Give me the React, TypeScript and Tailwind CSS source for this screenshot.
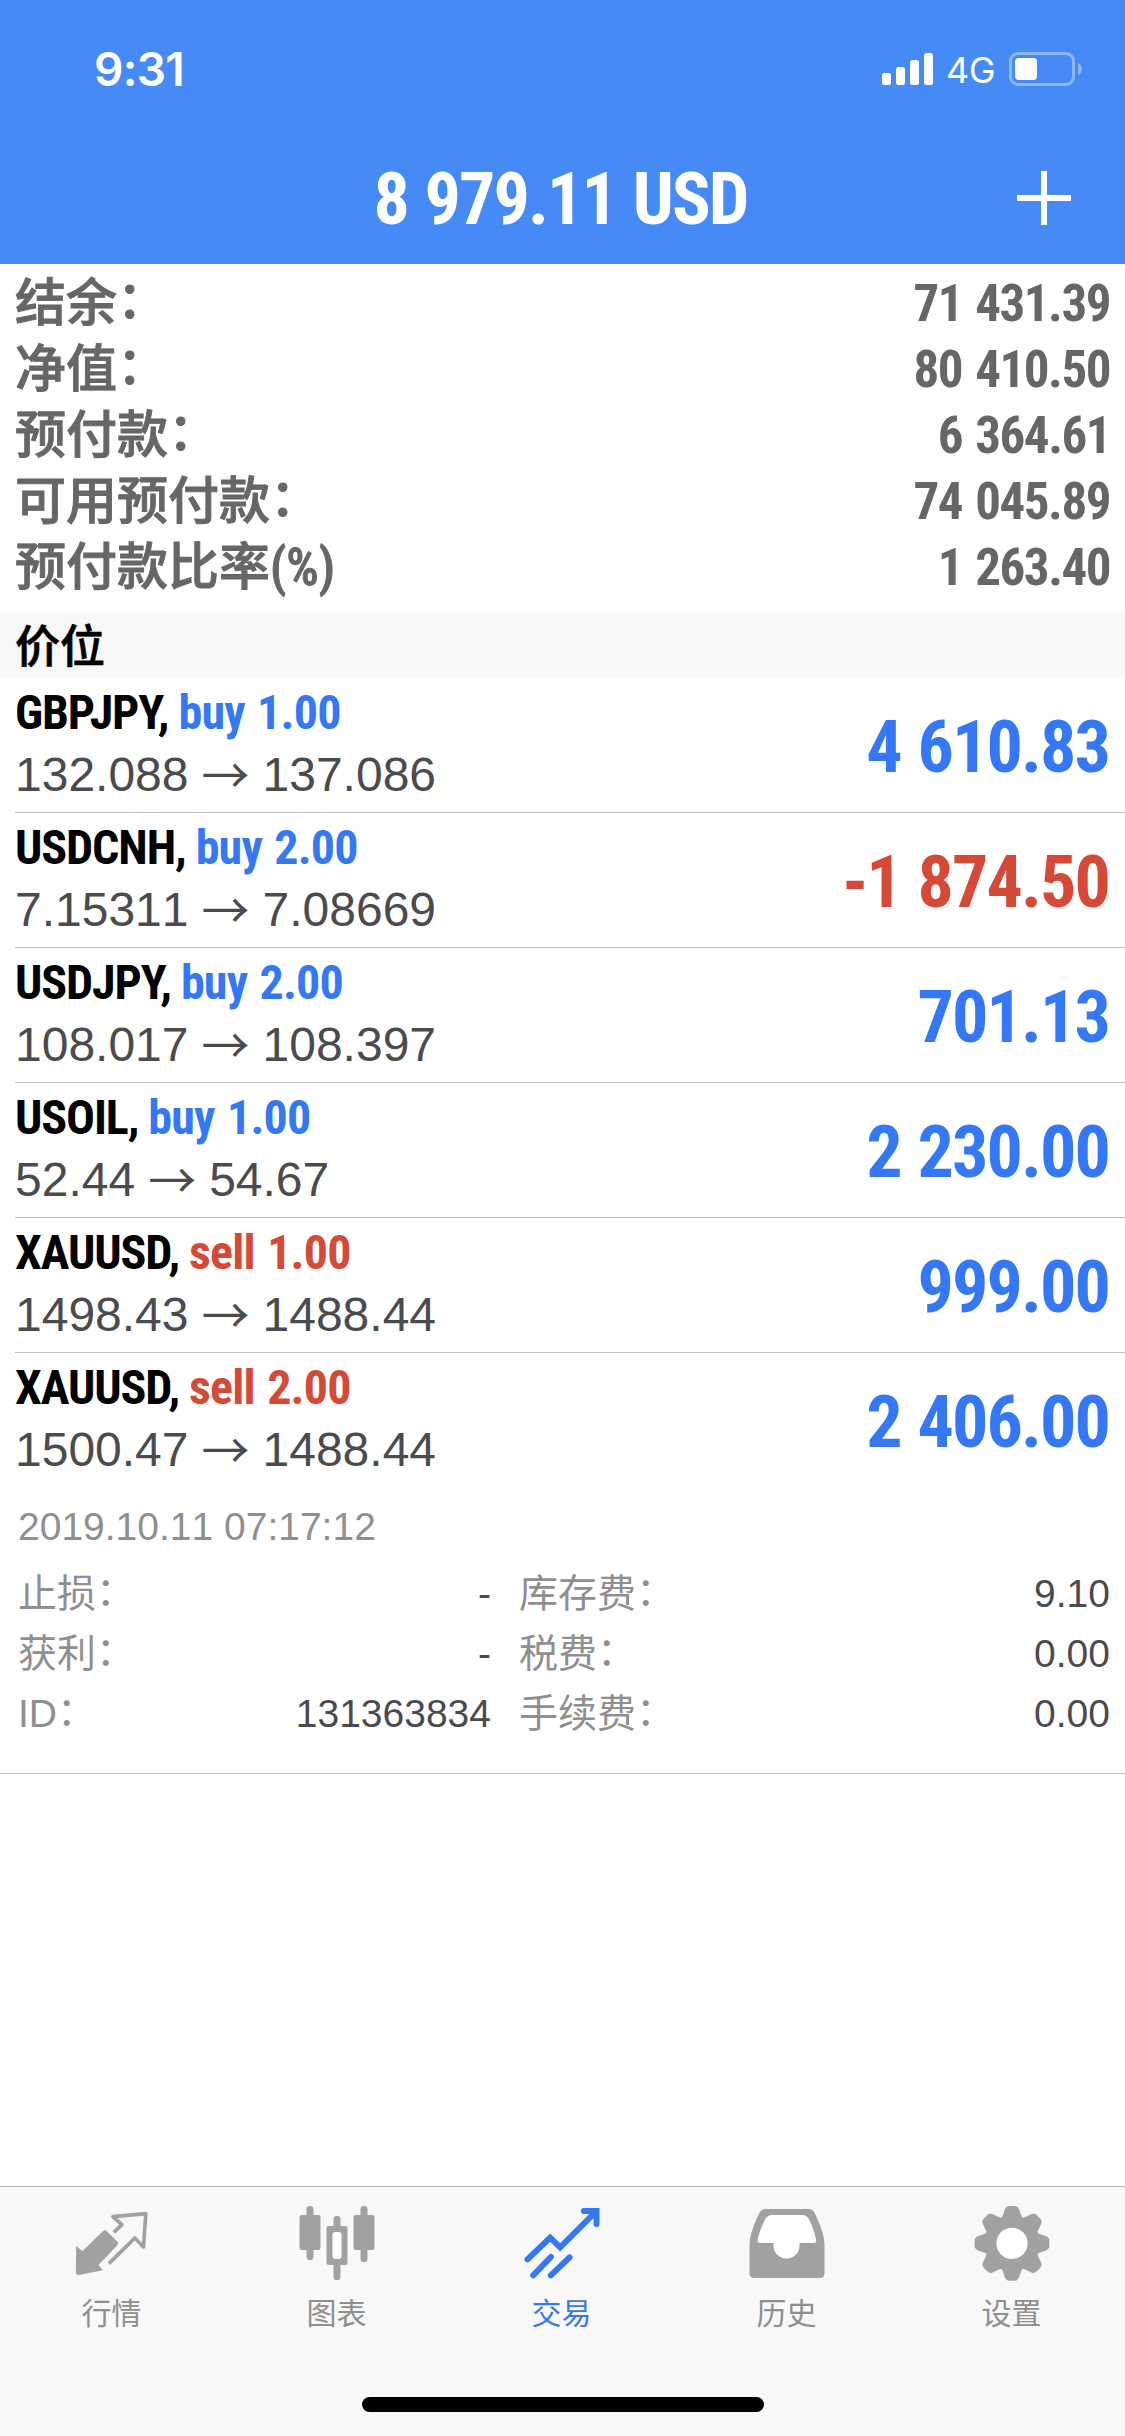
import type { ReactNode } from "react";

type Position = {
    symbol: string
    side: "buy" | "sell"
    volume: string
    open: string
    current: string
    profit: string
}

type Tab = { label: string, icon: ReactNode, active?: boolean }

const summary = [
    { label: "结余：", value: "71 431.39" },
    { label: "净值：", value: "80 410.50" },
    { label: "预付款：", value: "6 364.61" },
    { label: "可用预付款：", value: "74 045.89" },
    { label: "预付款比率(%)", value: "1 263.40" },
]

const positions: Position[] = [
    { symbol: "GBPJPY", side: "buy", volume: "1.00", open: "132.088", current: "137.086", profit: "4 610.83" },
    { symbol: "USDCNH", side: "buy", volume: "2.00", open: "7.15311", current: "7.08669", profit: "-1 874.50" },
    { symbol: "USDJPY", side: "buy", volume: "2.00", open: "108.017", current: "108.397", profit: "701.13" },
    { symbol: "USOIL", side: "buy", volume: "1.00", open: "52.44", current: "54.67", profit: "2 230.00" },
    { symbol: "XAUUSD", side: "sell", volume: "1.00", open: "1498.43", current: "1488.44", profit: "999.00" },
    { symbol: "XAUUSD", side: "sell", volume: "2.00", open: "1500.47", current: "1488.44", profit: "2 406.00" },
]

const details = [
    { label: "止损：", value: "-", feeLabel: "库存费：", fee: "9.10" },
    { label: "获利：", value: "-", feeLabel: "税费：", fee: "0.00" },
    { label: "ID：", value: "131363834", feeLabel: "手续费：", fee: "0.00" },
]

function QuotesIcon() {
    return <svg className="size-20" viewBox="97.5 99 240 240" fill="none">
        <path d="M107 228 L126 243 L188 183 Q193 178 198 183 L231 215 Q236 220 231 225 L174 285 L187 301 L115 315 Q106 315 106 306 Z" fill="#a1a1a1" />
        <path d="M220 187 L244 164 L217 140 L316 131 L309 231 L283 204 L205 281" stroke="#a1a1a1" strokeWidth="11" strokeLinejoin="round" />
    </svg>
}

function ChartIcon() {
    return <svg className="size-20" viewBox="772.5 99 240 240" fill="#a1a1a1">
        <rect x="798" y="108" width="21" height="162" rx="10" />
        <rect x="777" y="135" width="63" height="105" rx="7" />
        <rect x="879" y="138" width="21" height="192" rx="10" />
        <rect x="858" y="168" width="63" height="117" rx="7" />
        <rect x="876" y="186" width="27" height="81" rx="9" fill="#fff" />
        <rect x="960" y="108" width="21" height="168" rx="10" />
        <rect x="939" y="135" width="63" height="105" rx="7" />
    </svg>
}

function TradeIcon() {
    return <svg className="size-20" viewBox="67.5 39 240 240" fill="none" stroke="#3478f6" strokeWidth="18" strokeLinecap="round">
        <path d="M81 208 L149 143 L179 172 L284 67" />
        <path d="M250 63 H288 V102" />
        <path d="M98 256 L151 201" />
        <path d="M151 256 L207 202" />
    </svg>
}

function HistoryIcon() {
    return <svg className="size-20" viewBox="742.5 39 240 240">
        <path d="M747 250 V162 Q748 128 775 72 Q782 57 795 57 H925 Q937 57 944 72 Q971 128 972 162 V250 Q972 264 958 264 H761 Q747 264 747 250 Z" fill="#a1a1a1" />
        <path d="M771 150 Q770 158 778 159 H819 V167 A39 39 0 0 0 897 167 V159 H940 Q949 158 947 150 Q942 124 927 91 Q920 75 905 75 H815 Q800 75 793 89 Q776 124 771 150 Z" fill="#fff" />
    </svg>
}

function SettingsIcon() {
    return <svg className="size-20" viewBox="97.5 39 240 240" fill="#a1a1a1">
        <g transform="translate(214.5 160)">
            <circle r="83" />
            {[0, 45, 90, 135, 180, 225, 270, 315].map(angle =>
                <path key={angle} transform={`rotate(${angle})`} d="M-34 -74 Q-29 -78 -26 -88 L-22 -100 Q-18 -112 -8 -112 H8 Q18 -112 22 -100 L26 -88 Q29 -78 34 -74 Z" />
            )}
            <circle r="47" fill="#fff" />
        </g>
    </svg>
}

const tabs: Tab[] = [
    { label: "行情", icon: <QuotesIcon /> },
    { label: "图表", icon: <ChartIcon /> },
    { label: "交易", icon: <TradeIcon />, active: true },
    { label: "历史", icon: <HistoryIcon /> },
    { label: "设置", icon: <SettingsIcon /> },
]

// full-width colon sits too low next to the characters, lift it a bit
function Label({ text }: { text: string }) {
    if (!text.endsWith("：")) return <span>{text}</span>

    return <span>
        {text.slice(0, -1)}
        <span className="align-[0.05em] font-['Noto_Sans_CJK_SC',sans-serif] leading-none">：</span>
    </span>
}

function StatusBar() {
    return <div className="flex h-[132px] items-start justify-between pl-[94px] pr-[42px]">
        <div className="mt-[41px] font-['Inter',sans-serif] text-[46px]/[56px] font-semibold tracking-[-0.7px]">9:31</div>
        <div className="mt-[52px] flex h-[34px] items-center">
            <svg className="h-[34px] w-[52px]" viewBox="0 0 52 34" fill="#fff">
                <rect x="0" y="21" width="9" height="12" rx="2.5" />
                <rect x="14" y="15" width="9" height="18" rx="2.5" />
                <rect x="28" y="8" width="9" height="25" rx="2.5" />
                <rect x="42" y="1" width="9" height="32" rx="2.5" />
            </svg>
            <span className="ml-3 w-[50px] pt-[2px] font-['Inter',sans-serif] text-[36px]/[36px] tracking-[-0.5px]">4G</span>
            <svg className="ml-[13px] h-[34px] w-[74px]" viewBox="0 0 74 34">
                <rect x="1.5" y="1.5" width="63" height="31" rx="7.5" fill="none" stroke="#8cb8fa" strokeWidth="3" />
                <rect x="6" y="6" width="22" height="22" rx="4" fill="#fff" />
                <path d="M69 11 Q73 13 73 17 T69 23 Z" fill="#8cb8fa" />
            </svg>
        </div>
    </div>
}

function PositionRow({ item, last }: { item: Position, last: boolean }) {
    const sideColor = item.side === "buy" ? "text-[#3478f6]" : "text-[#d64937]"
    const profitColor = item.profit.startsWith("-") ? "text-[#d64937]" : "text-[#3478f6]"

    return <div className={"ml-[15px] flex h-[135px] justify-between pr-4 " + (last ? "" : "border-b border-[#c0c0c3]")}>
        <div>
            <div className="h-[68px] font-['Roboto_Condensed',sans-serif] text-[48px]/[70px] font-bold [font-kerning:normal]">
                <span className="tracking-[-1.1px] text-black">{item.symbol}, </span>
                <span className={"tracking-[-0.8px] [word-spacing:2px] " + sideColor}>{item.side} {item.volume}</span>
            </div>
            <div className="flex h-[58px] items-center gap-[13px] text-[48px]/[58px] text-[#4b4b4e]">
                <span>{item.open}</span>
                <span className="pb-1.5 font-['Noto_Sans_CJK_SC',sans-serif]">→</span>
                <span>{item.current}</span>
            </div>
        </div>
        <div className={"pt-[2px] font-['Roboto_Condensed',sans-serif] text-[72px]/[136px] font-bold tracking-[-1.9px] [word-spacing:2px] " + profitColor}>{item.profit}</div>
    </div>
}

export default function App() {
    return <div className="flex h-[2436px] w-[1125px] flex-col bg-white font-['Liberation_Sans','Noto_Sans_CJK_SC',sans-serif] [font-kerning:none]">
        <header className="h-[264px] bg-[#468bf5] text-white">
            <StatusBar />
            <div className="grid h-[132px] grid-cols-[1fr_auto_1fr] items-center">
                <h1 className="col-start-2 pr-[4px] pt-[3px] font-['Roboto_Condensed',sans-serif] text-[72px]/[129px] font-bold tracking-[-1.9px] [word-spacing:2px]">8 979.11 USD</h1>
                <svg className="mr-[54px] size-[54px] justify-self-end" viewBox="0 0 54 54" fill="#fff">
                    <rect x="24" y="0" width="6" height="54" />
                    <rect x="0" y="24" width="54" height="6" />
                </svg>
            </div>
        </header>

        <section className="h-[348px] px-[15px] pt-[7px] text-[#666]">
            {summary.map(item => <div key={item.label} className="flex h-[66px] items-center justify-between font-['Roboto_Condensed','Noto_Sans_CJK_SC',sans-serif] text-[51px]/[66px]">
                <span className="font-medium [-webkit-text-stroke:0.9px]"><Label text={item.label} /></span>
                <span className="font-bold tracking-[-1.5px] [word-spacing:3px]">{item.value}</span>
            </div>)}
        </section>

        <h2 className="h-[66px] bg-[#f7f7f7] px-[15px] font-['Noto_Sans_CJK_SC',sans-serif] text-[45px]/[63px] font-medium text-black [-webkit-text-stroke:0.7px]">价位</h2>

        <main>
            {positions.map((item, i) => <PositionRow key={i} item={item} last={i === positions.length - 1} />)}
        </main>

        <section className="h-[286px] border-b border-[#c0c0c3] pl-[18px] pr-[15px] text-[39px]/[60px] text-[#8f8f8f]">
            <div className="flex h-[76px] items-center pt-[2px]">2019.10.11 07:17:12</div>
            {details.map(row => <div key={row.label} className="flex h-[60px] items-center">
                <div className="flex w-[473px] justify-between">
                    <Label text={row.label} />
                    <span className="text-[#4b4b4e]">{row.value}</span>
                </div>
                <div className="ml-[28px] flex flex-1 justify-between">
                    <Label text={row.feeLabel} />
                    <span className="text-[#4b4b4e]">{row.fee}</span>
                </div>
            </div>)}
        </section>

        <nav className="mt-auto flex h-[250px] flex-col border-t border-[#b2b2b2] bg-[#f8f8f8]">
            <div className="grid grid-cols-5 pt-4">
                {tabs.map(tab => <div key={tab.label} className={"flex flex-col items-center " + (tab.active ? "text-[#3478f6]" : "text-[#8f8f8f]")}>
                    {tab.icon}
                    <span className="mt-1.5 pr-[2px] font-['Noto_Sans_CJK_SC',sans-serif] text-[30px]/[44px]">{tab.label}</span>
                </div>)}
            </div>
            <div className="mx-auto mb-6 mt-auto h-[15px] w-[402px] rounded-full bg-black" />
        </nav>
    </div>
}
